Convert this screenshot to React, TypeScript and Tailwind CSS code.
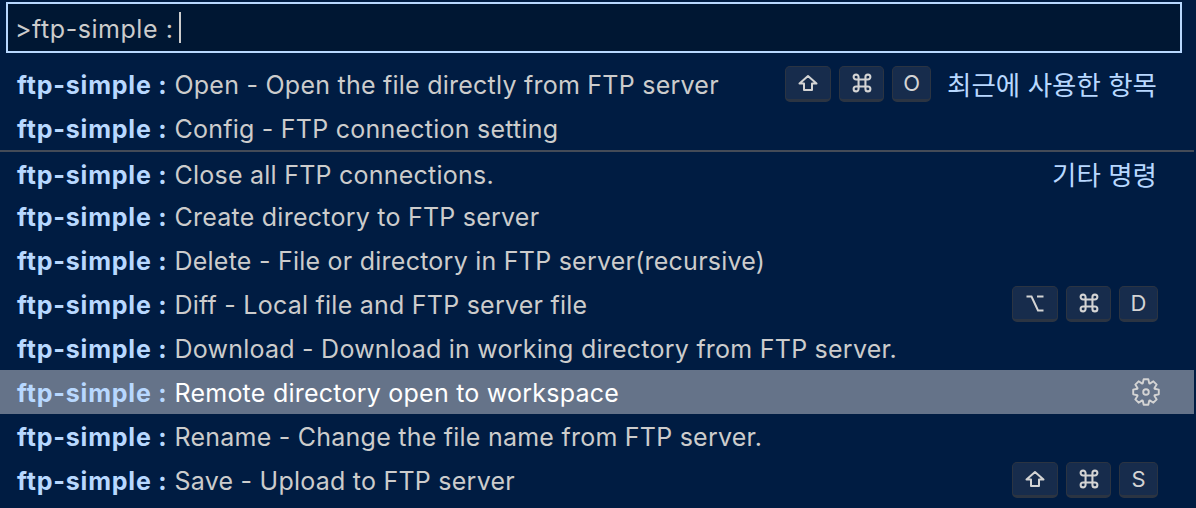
import type { ReactNode } from "react";

type Row = {
  label: string;
  keys?: string[];
  group?: string;
  active?: boolean;
};

const FONT = "font-['Inter','Noto_Sans_CJK_KR',sans-serif]";

function ShiftIcon() {
  return (
    <svg width="20" height="18" viewBox="0 0 20 18" fill="none" stroke="#d4d4d4" strokeWidth="2" strokeLinejoin="round">
      <path d="M10 2 L18.5 9.5 H14 V16 H6 V9.5 H1.5 Z" />
    </svg>
  );
}

function CmdIcon() {
  return (
    <svg width="22" height="22" viewBox="0 0 16 16" fill="none" stroke="#d4d4d4" strokeWidth="1.5">
      <path d="M5.5 5.5 H10.5 V10.5 H5.5 Z M5.5 5.5 H3.7 A1.8 1.8 0 1 1 5.5 3.7 Z M10.5 5.5 V3.7 A1.8 1.8 0 1 1 12.3 5.5 Z M10.5 10.5 H12.3 A1.8 1.8 0 1 1 10.5 12.3 Z M5.5 10.5 V12.3 A1.8 1.8 0 1 1 3.7 10.5 Z" />
    </svg>
  );
}

function OptIcon() {
  return (
    <svg width="18" height="17" viewBox="0 0 18 17" fill="none" stroke="#d4d4d4" strokeWidth="2">
      <path d="M0.5 1.5 H5.5 L12 15.5 H17.5 M11 1.5 H17.5" />
    </svg>
  );
}

// 8 toothed settings gear, the points are worked out once from the angles
const GEAR_PATH = (() => {
  const pts: string[] = [];
  for (let i = 0; i < 8; i++) {
    const a = (i * Math.PI) / 4 - Math.PI / 2;
    const p = (r: number, off: number) => {
      const x = 14 + r * Math.cos(a + off);
      const y = 14 + r * Math.sin(a + off);
      return `${x.toFixed(2)} ${y.toFixed(2)}`;
    };
    pts.push(p(9.2, -0.36), p(13, -0.18), p(13, 0.18), p(9.2, 0.36));
  }
  return `M${pts.join(" L")} Z`;
})();

function GearIcon() {
  return (
    <svg width="28" height="28" viewBox="0 0 28 28" fill="none" stroke="#d4d4d4" strokeWidth="1.9" strokeLinejoin="round">
      <path d={GEAR_PATH} />
      <circle cx="14" cy="14" r="2.8" />
    </svg>
  );
}

const ROWS_TOP: Row[] = [
  { label: "Open - Open the file directly from FTP server", keys: ["shift", "cmd", "O"], group: "최근에 사용한 항목" },
  { label: "Config - FTP connection setting" },
];

const ROWS_BOTTOM: Row[] = [
  { label: "Create directory to FTP server" },
  { label: "Delete - File or directory in FTP server(recursive)" },
  { label: "Diff - Local file and FTP server file", keys: ["opt", "cmd", "D"] },
  { label: "Download - Download in working directory from FTP server." },
  { label: "Remote directory open to workspace", active: true },
  { label: "Rename - Change the file name from FTP server." },
  { label: "Save - Upload to FTP server", keys: ["shift", "cmd", "S"] },
];

function Key({ k }: { k: string }) {
  let inner: ReactNode = k;
  if (k === "shift") inner = <ShiftIcon />;
  if (k === "cmd") inner = <CmdIcon />;
  if (k === "opt") inner = <OptIcon />;
  return (
    <span
      className={`flex h-[36px] items-center justify-center rounded-[5px] border border-b-[3px] border-[#2b3442] bg-[#172c4c] text-[22px] text-[#d4d4d4] ${k === "cmd" ? "w-[45px]" : k.length > 1 ? "w-[46px]" : "w-[39px]"}`}
    >
      {inner}
    </span>
  );
}

function QuickRow({ row, className = "" }: { row: Row; className?: string }) {
  return (
    <div className={`flex h-[44px] items-center pl-[17px] ${row.active ? "bg-[#657389] pr-[34px]" : "pr-[36px]"} ${className}`}>
      <span className="shrink-0 pt-[2px] font-bold tracking-[0.8px] text-[#b8d8ff]">ftp-simple :</span>
      <span className={`ml-[7px] pt-[2px] tracking-[0.24px] ${row.active ? "text-white" : "text-[#cccccc]"}`}>{row.label}</span>
      <div className="ml-auto flex items-center">
        {row.keys && (
          <div className="flex gap-[8px]">
            {row.keys.map((k) => (
              <Key key={k} k={k} />
            ))}
          </div>
        )}
        {row.group && <span className="ml-[16px] mr-[1px] pt-[2px] text-[26.5px] text-[#b8d8ff]">{row.group}</span>}
        {row.active && <GearIcon />}
      </div>
    </div>
  );
}

export default function App() {
  return (
    <div className={`h-[508px] w-[1196px] overflow-hidden bg-[#001c42] text-[25px] leading-none ${FONT}`}>
      <div className="pl-[6px] pr-[14px] pt-[2px]">
        <div className="flex h-[51px] items-center border-2 border-[#b8d8ff] bg-[#001733] pl-[9px] text-[#cccccc]">
          <span className="-ml-[2px] pt-[3px] tracking-[0.55px]">&gt;ftp-simple :</span>
          <span className="ml-[6px] h-[31px] w-[2px] bg-[#cccccc]" />
        </div>
      </div>
      <div className="mr-[2px] mt-[9px]">
        <QuickRow row={ROWS_TOP[0]} />
        <QuickRow row={ROWS_TOP[1]} />
        <QuickRow
          row={{ label: "Close all FTP connections.", group: "기타 명령" }}
          className="border-t-2 border-[#444b57] pt-[2px]"
        />
        {ROWS_BOTTOM.map((r) => (
          <QuickRow key={r.label} row={r} />
        ))}
      </div>
    </div>
  );
}
